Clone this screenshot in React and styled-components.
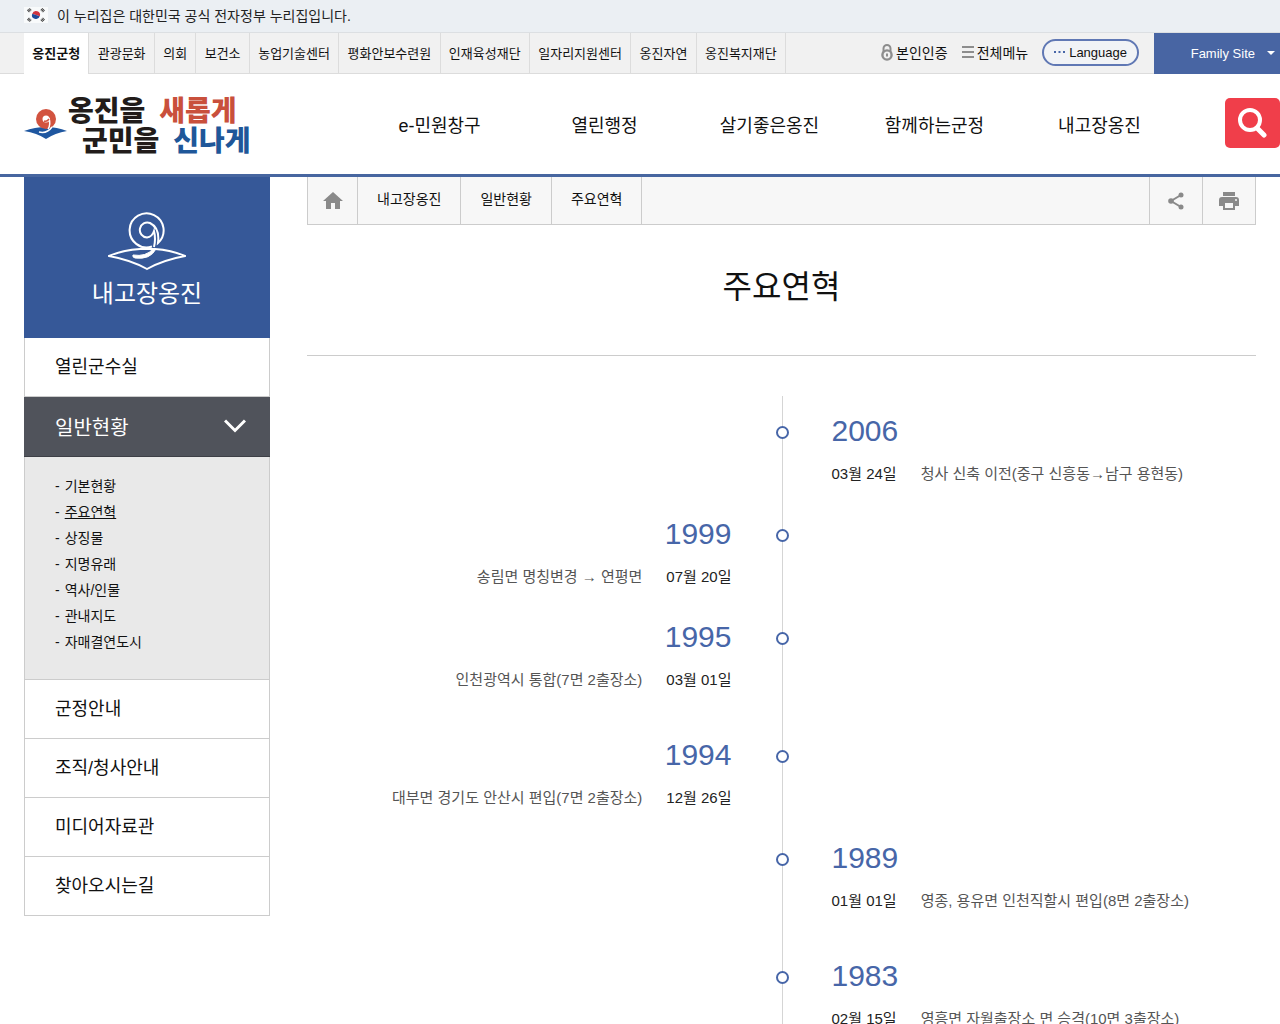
import React from "react";
import styled, { createGlobalStyle } from "styled-components";

const topSites = [
  "옹진군청",
  "관광문화",
  "의회",
  "보건소",
  "농업기술센터",
  "평화안보수련원",
  "인재육성재단",
  "일자리지원센터",
  "옹진자연",
  "옹진복지재단",
];

const mainMenu = ["e-민원창구", "열린행정", "살기좋은옹진", "함께하는군정", "내고장옹진"];

const sideMenu = [
  { name: "열린군수실" },
  {
    name: "일반현황",
    children: ["기본현황", "주요연혁", "상징물", "지명유래", "역사/인물", "관내지도", "자매결연도시"],
  },
  { name: "군정안내" },
  { name: "조직/청사안내" },
  { name: "미디어자료관" },
  { name: "찾아오시는길" },
];

const history = [
  { year: "2006", date: "03월 24일", text: "청사 신축 이전(중구 신흥동→남구 용현동)", side: "right" },
  { year: "1999", date: "07월 20일", text: "송림면 명칭변경 → 연평면", side: "left" },
  { year: "1995", date: "03월 01일", text: "인천광역시 통합(7면 2출장소)", side: "left", last: true },
  { year: "1994", date: "12월 26일", text: "대부면 경기도 안산시 편입(7면 2출장소)", side: "left" },
  { year: "1989", date: "01월 01일", text: "영종, 용유면 인천직할시 편입(8면 2출장소)", side: "right", last: true },
  { year: "1983", date: "02월 15일", text: "영흥면 자월출장소 면 승격(10면 3출장소)", side: "right" },
];

const FlagIcon = () => (
  <svg width="24" height="16" viewBox="0 0 24 16" aria-hidden="true">
    <rect width="24" height="16" fill="#f8fafb" />
    <path d="M8 8a4 4 0 0 1 8 0z" fill="#cf3440" transform="rotate(20 12 8)" />
    <path d="M8 8a4 4 0 0 0 8 0z" fill="#1d4b9b" transform="rotate(20 12 8)" />
    <g stroke="#444" strokeWidth="3" strokeDasharray="1 .4">
      <path d="M4 4.4 6.600 2M17.400 2 20 4.400M4 11.600 6.600 14M17.400 14 20 11.600" />
    </g>
  </svg>
);

const LockIcon = () => (
  <svg width="12" height="17" viewBox="0 0 12 17" fill="none" stroke="#8d8d8d" aria-hidden="true">
    <path d="M2.500 8V4.500a3.500 3.500 0 0 1 7 0V8" strokeWidth="2" />
    <circle cx="6" cy="11" r="4.600" strokeWidth="2.400" />
    <path d="M6 9.500v3" strokeWidth="2" />
  </svg>
);

const BarsIcon = () => (
  <svg width="12" height="12" viewBox="0 0 12 12" stroke="#8d8d8d" strokeWidth="2" aria-hidden="true">
    <path d="M0 1h12M0 6h12M0 11h12" />
  </svg>
);

const DotsIcon = () => (
  <svg width="11" height="3" viewBox="0 0 11 3" fill="#4766a8" aria-hidden="true">
    <path d="M0 0h2v2H0zM4.500 0h2v2h-2zM9 0h2v2H9z" />
  </svg>
);

const CaretIcon = () => (
  <svg width="8" height="4" viewBox="0 0 8 4" fill="#fff" aria-hidden="true">
    <path d="M0 0h8L4 4z" />
  </svg>
);

const SearchIcon = () => (
  <svg width="30" height="30" viewBox="0 0 30 30" fill="none" stroke="#fff" aria-hidden="true">
    <circle cx="12" cy="12" r="10" strokeWidth="4" />
    <path d="m19 20 7 7" strokeWidth="5" strokeLinecap="round" />
  </svg>
);

const LogoMark = () => (
  <svg width="44" height="32" viewBox="0 0 44 32" aria-hidden="true">
    <path d="M0 23q11-4 22-4t21 4q-12 2-21 8Q13 25 0 23z" fill="#1f57a0" />
    <circle cx="22" cy="11" r="10" fill="#d2533f" />
    <circle cx="22" cy="11" r="3.500" fill="#fff" />
    <path d="M25 10q2 7-1 11" fill="none" stroke="#fff" strokeWidth="1.500" />
    <path d="M15 24q8 2 13-5" fill="none" stroke="#fff" strokeWidth="1.500" />
    <path d="M20 13q3 1 5-2" fill="none" stroke="#d2533f" strokeWidth="1.500" />
  </svg>
);

const SideMark = () => (
  <svg width="78" height="60" viewBox="0 0 78 60" fill="none" stroke="#fff" strokeWidth="2" aria-hidden="true">
    <path d="M46 36q2-8 0-16-2 6-7 6.500A7.500 7.500 0 1 1 42 12q10 5 8 20A17 17 0 1 0 44 35.500" />
    <path d="M32 38h15q16 1 30 7-22 4-38 13Q23 49 1 45q14-6 31-7z" />
    <path d="M25 44q13 2 20-6h3q-6 11-21 9-3-1-2-3z" fill="#fff" strokeWidth="1" />
  </svg>
);

const HomeIcon = () => (
  <svg width="20" height="18" viewBox="0 0 20 18" fill="#8a8a8a" aria-hidden="true">
    <path d="M10 0 0 9h3v8h5v-6h4v6h5V9h3z" />
  </svg>
);

const ShareIcon = () => (
  <svg width="16" height="18" viewBox="0 0 16 18" fill="#8a8a8a" aria-hidden="true">
    <path d="M13 3 3 9l10 6" fill="none" stroke="#8a8a8a" strokeWidth="2" />
    <circle cx="13" cy="3" r="2.500" />
    <circle cx="3" cy="9" r="2.800" />
    <circle cx="13" cy="15" r="2.500" />
  </svg>
);

const PrintIcon = () => (
  <svg width="20" height="18" viewBox="0 0 20 18" fill="#8a8a8a" aria-hidden="true">
    <path d="M4 0h12v4H4z" />
    <path d="M3 5h14q3 0 3 3v6h-4v4H4v-4H0V8q0-3 3-3z" />
    <path d="M6 11h8v5H6z" fill="#f7f7f7" />
    <circle cx="17" cy="8" r="1" fill="#f7f7f7" />
  </svg>
);

const ChevronIcon = () => (
  <svg width="22" height="14" viewBox="0 0 22 14" fill="none" stroke="#fff" strokeWidth="3" aria-hidden="true">
    <path d="m1 1.500 10 10 10-10" />
  </svg>
);

const App = () => (
  <>
    <GlobalStyle />
    <GovBar>
      <FlagIcon />
      이 누리집은 대한민국 공식 전자정부 누리집입니다.
    </GovBar>
    <TopBar>
      <SiteTabs>
        {topSites.map((site, i) => (
          <SiteTab key={site} href="#" $active={i === 0}>
            {site}
          </SiteTab>
        ))}
      </SiteTabs>
      <Utils>
        <UtilLink href="#">
          <LockIcon />
          본인인증
        </UtilLink>
        <UtilLink href="#">
          <BarsIcon />
          전체메뉴
        </UtilLink>
        <LanguageButton type="button">
          <DotsIcon />
          Language
        </LanguageButton>
        <FamilyButton type="button">
          Family Site
          <CaretIcon />
        </FamilyButton>
      </Utils>
    </TopBar>
    <Header>
      <Logo href="#">
        <LogoMark />
        <Slogan>
          <SloganLine>
            <Word>옹진을</Word>
            <Word $color="#c9503c">새롭게</Word>
          </SloganLine>
          <SloganLine $indent>
            <Word>군민을</Word>
            <Word $color="#1f5799">신나게</Word>
          </SloganLine>
        </Slogan>
      </Logo>
      <MainNav>
        {mainMenu.map(item => (
          <MainLink key={item} href="#">
            {item}
          </MainLink>
        ))}
      </MainNav>
      <SearchButton type="button" aria-label="검색">
        <SearchIcon />
      </SearchButton>
    </Header>
    <Page>
      <Sidebar>
        <SideTitle>
          <SideMark />
          내고장옹진
        </SideTitle>
        <SideList>
          {sideMenu.map(({ name, children }) => (
            <li key={name}>
              <SideLink href="#" $active={!!children}>
                {name}
                {children && <ChevronIcon />}
              </SideLink>
              {children && (
                <SubList>
                  {children.map(child => (
                    <SubItem key={child}>
                      <SubLink href="#" $current={child === "주요연혁"}>
                        {child}
                      </SubLink>
                    </SubItem>
                  ))}
                </SubList>
              )}
            </li>
          ))}
        </SideList>
      </Sidebar>
      <Content>
        <Breadcrumb>
          <IconLink href="#" aria-label="홈">
            <HomeIcon />
          </IconLink>
          <Crumb href="#">내고장옹진</Crumb>
          <Crumb href="#">일반현황</Crumb>
          <Crumb href="#">주요연혁</Crumb>
          <Tools>
            <ToolButton type="button" aria-label="공유">
              <ShareIcon />
            </ToolButton>
            <ToolButton type="button" aria-label="인쇄">
              <PrintIcon />
            </ToolButton>
          </Tools>
        </Breadcrumb>
        <Title>주요연혁</Title>
        <Timeline>
          {history.map(({ year, date, text, side, last }) => (
            <Entry key={year} $side={side} $last={last}>
              <EntryBody $side={side}>
                <Year>{year}</Year>
                <Detail $side={side}>
                  <DateText>{date}</DateText>
                  <span>{text}</span>
                </Detail>
              </EntryBody>
            </Entry>
          ))}
        </Timeline>
      </Content>
    </Page>
  </>
);

export default App;

const GlobalStyle = createGlobalStyle`
  *,
  *::before {
    box-sizing: border-box;
  }
  body {
    margin: 0;
    background: #fff;
    color: #111;
    font-family: "Liberation Sans", "Noto Sans CJK KR", sans-serif;
    font-size: 14px;
  }
  a {
    color: inherit;
    text-decoration: none;
  }
  ul {
    margin: 0;
    padding: 0;
    list-style: none;
  }
  button {
    border: 0;
    padding: 0;
    font: inherit;
    cursor: pointer;
  }
  svg {
    flex: none;
  }
`;

const GovBar = styled.div`
  display: flex;
  align-items: center;
  gap: 9px;
  height: 32px;
  padding: 0 24px 2px;
  background: #ebeff3;
  color: #222;
`;

const TopBar = styled.div`
  display: flex;
  justify-content: space-between;
  height: 42px;
  padding-left: 24px;
  border-top: 1px solid #dcdfe2;
  border-bottom: 1px solid #dcdcdc;
  background: #f1f1f1;
`;

const SiteTabs = styled.nav`
  display: flex;
  flex: 0 1 762px;
`;

const SiteTab = styled.a`
  display: flex;
  flex: 1 0 auto;
  align-items: center;
  justify-content: center;
  padding: 0 8px 2px;
  border-right: 1px solid #dcdcdc;
  font-size: 13px;
  font-weight: ${({ $active }) => ($active ? 700 : 400)};
  background: ${({ $active }) => ($active ? "#fff" : "transparent")};
  margin-bottom: ${({ $active }) => ($active ? "-1px" : "0")};
`;

const Utils = styled.div`
  display: flex;
  align-items: center;
`;

const UtilLink = styled.a`
  display: flex;
  align-items: center;
  gap: 3px;
  margin-right: 14px;
  padding-bottom: 2px;
`;

const LanguageButton = styled.button`
  display: flex;
  align-items: center;
  gap: 4px;
  height: 27px;
  margin: 0 15px 2px 0;
  padding: 0 10px;
  border: 2px solid #6078b4;
  border-radius: 14px;
  background: #f1f3f6;
  color: #111;
  font-size: 13px;
`;

const FamilyButton = styled.button`
  display: flex;
  align-items: center;
  justify-content: flex-end;
  gap: 12px;
  width: 126px;
  height: 41px;
  padding-right: 5px;
  background: #4865a3;
  color: #fff;
  font-size: 13px;
`;

const Header = styled.header`
  display: flex;
  align-items: center;
  justify-content: space-between;
  height: 103px;
  padding-left: 24px;
  border-bottom: 3px solid #4766a0;
`;

const Logo = styled.a`
  display: flex;
  align-items: center;
  width: 240px;
`;

const Slogan = styled.span`
  padding-top: 6px;
  color: #221c1a;
  font-size: 28px;
  font-weight: 900;
  line-height: 30px;
  white-space: nowrap;
`;

const SloganLine = styled.span`
  display: flex;
  gap: 14px;
  padding-left: ${({ $indent }) => ($indent ? "14px" : "0")};
`;

const Word = styled.span`
  color: ${({ $color }) => $color || "inherit"};
`;

const MainNav = styled.nav`
  display: flex;
  flex: 1;
  margin: 0 43px 0 93px;
`;

const MainLink = styled.a`
  flex: 1;
  font-size: 18px;
  text-align: center;
  white-space: nowrap;
`;

const SearchButton = styled.button`
  display: flex;
  align-items: center;
  justify-content: center;
  width: 55px;
  height: 50px;
  margin-bottom: 2px;
  border-radius: 5px;
  background: #f03e4a;
`;

const Page = styled.div`
  display: flex;
  align-items: flex-start;
  gap: 37px;
  padding: 0 24px;
`;

const Sidebar = styled.aside`
  flex: 0 0 246px;
`;

const SideTitle = styled.h2`
  display: flex;
  flex-direction: column;
  align-items: center;
  gap: 3px;
  height: 161px;
  margin: 0;
  padding-top: 34px;
  background: #365898;
  color: #fff;
  font-size: 24px;
  font-weight: 400;
`;

const SideList = styled.ul`
  border: solid #ccc;
  border-width: 0 1px;
`;

const SideLink = styled.a`
  display: flex;
  align-items: center;
  justify-content: space-between;
  height: ${({ $active }) => ($active ? "60px" : "59px")};
  margin: ${({ $active }) => ($active ? "0 -1px" : "0")};
  padding: ${({ $active }) => ($active ? "0 24px 1px 31px" : "0 24px 4px 30px")};
  border-bottom: 1px solid ${({ $active }) => ($active ? "#3d3f46" : "#ccc")};
  background: ${({ $active }) => ($active ? "#50535b" : "#fff")};
  color: ${({ $active }) => ($active ? "#fff" : "#111")};
  font-size: ${({ $active }) => ($active ? "20px" : "18px")};
`;

const SubList = styled.ul`
  padding: 16px 30px 24px;
  border-bottom: 1px solid #ccc;
  background: #e9e9e9;
`;

const SubItem = styled.li`
  display: flex;
  gap: 5px;
  line-height: 26px;

  &::before {
    content: "-";
  }
`;

const SubLink = styled.a`
  text-decoration: ${({ $current }) => ($current ? "underline" : "none")};
`;

const Content = styled.main`
  flex: 1;
  min-width: 0;
`;

const Breadcrumb = styled.nav`
  display: flex;
  height: 48px;
  border: solid #ccc;
  border-width: 0 1px 1px;
  background: #f7f7f7;
`;

const IconLink = styled.a`
  display: flex;
  align-items: center;
  justify-content: center;
  width: 50px;
  border-right: 1px solid #ccc;
`;

const Crumb = styled.a`
  display: flex;
  align-items: center;
  padding: 0 19px 5px;
  border-right: 1px solid #ccc;
`;

const Tools = styled.div`
  display: flex;
  margin-left: auto;
`;

const ToolButton = styled.button`
  display: flex;
  align-items: center;
  justify-content: center;
  width: 53px;
  border-left: 1px solid #ccc;
  background: none;
`;

const Title = styled.h1`
  height: 131px;
  margin: 0 0 40px;
  border-bottom: 1px solid #ccc;
  font-size: 32px;
  font-weight: 400;
  line-height: 124px;
  text-align: center;
`;

const Timeline = styled.ul`
  display: flex;
  flex-direction: column;
`;

const Entry = styled.li`
  display: flex;
  justify-content: ${({ $side }) => ($side === "left" ? "flex-start" : "flex-end")};
  min-height: ${({ $last }) => ($last ? "118px" : "103px")};
  background: linear-gradient(#d5d5d5, #d5d5d5) calc(50% + 1px) 0 / 1px 100% no-repeat;
`;

const EntryBody = styled.div`
  position: relative;
  width: 50%;
  padding: ${({ $side }) => ($side === "left" ? "18px 50px 0 0" : "18px 0 0 50px")};
  text-align: ${({ $side }) => ($side === "left" ? "right" : "left")};

  /* marker on the centre line */
  &::before {
    content: "";
    position: absolute;
    top: 30px;
    ${({ $side }) => ($side === "left" ? "right: -7px" : "left: -6px")};
    width: 13px;
    height: 13px;
    border: 2px solid #4766a8;
    border-radius: 50%;
    background: #fff;
  }
`;

const Year = styled.h3`
  margin: 0 0 14px;
  color: #4766a8;
  font-size: 30px;
  font-weight: 400;
  line-height: 34px;
`;

const Detail = styled.div`
  display: flex;
  flex-direction: ${({ $side }) => ($side === "left" ? "row-reverse" : "row")};
  gap: 24px;
  color: #555;
  font-size: 15px;
  line-height: 24px;
`;

const DateText = styled.span`
  color: #222;
`;
